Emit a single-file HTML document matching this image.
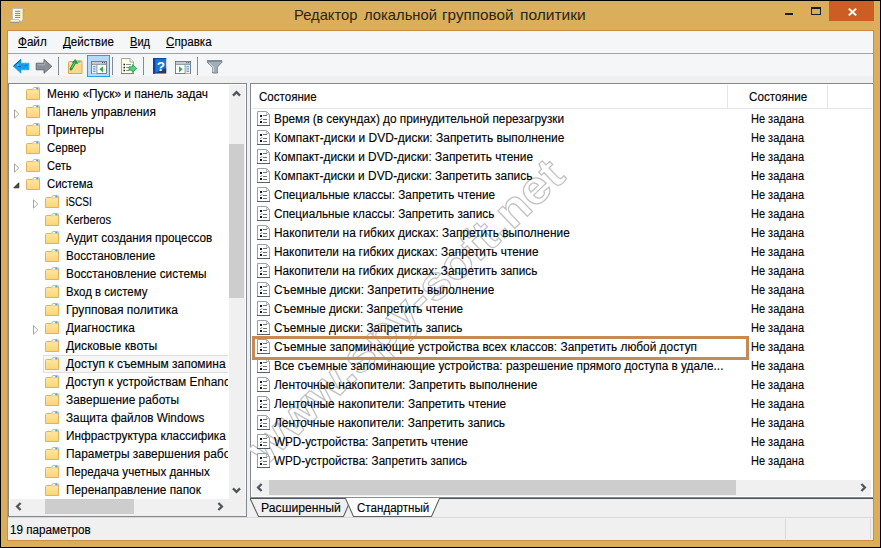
<!DOCTYPE html>
<html lang="ru"><head><meta charset="utf-8"><title>Редактор локальной групповой политики</title>
<style>
html,body{margin:0;padding:0}
body{width:881px;height:548px;position:relative;overflow:hidden;background:#DBAE5B;font-family:"Liberation Sans",sans-serif;font-size:12px;color:#000}
.abs,.fold,.t,.sel,div.b{position:absolute}
.t{white-space:nowrap;transform-origin:0 0;font-size:12px;line-height:18px;-webkit-text-stroke:0.12px #000}
.t u{text-decoration:underline;text-underline-offset:1px;text-decoration-skip-ink:none}
#frame{position:absolute;left:0;top:0;width:879px;height:546px;border:1px solid #000}
#client{position:absolute;left:7px;top:30px;width:865px;height:509px;border:1px solid #c98f48;background:#f0f0f0}
#menubar{position:absolute;left:8px;top:31px;width:865px;height:22px;background:#f5f6f7}
#tbline{position:absolute;left:8px;top:53px;width:865px;height:1px;background:#a3a3a3}
#toolbar{position:absolute;left:8px;top:54px;width:865px;height:22px;background:#f5f6f7}
#tree{position:absolute;left:8px;top:83px;width:237px;height:432px;border:1px solid #828790;background:#fff}
#treeclip{position:absolute;left:1px;top:1px;width:219px;height:414px;overflow:hidden;background:#fff}
.sel{background:#f7f7f7;border:1px solid #dedede}
#right{position:absolute;left:250px;top:83px;width:622px;height:413px;border-left:1px solid #828790;border-top:1px solid #828790;border-bottom:1px solid #858c93;background:#fff}
.sb{position:absolute;background:#f0f0f0}
.thumb{position:absolute;background:#cdcdcd}
</style></head><body>
<svg width="0" height="0" style="position:absolute"><defs>
<linearGradient id="fg" x1="0" y1="0" x2="0" y2="1"><stop offset="0" stop-color="#feeab0"/><stop offset="1" stop-color="#fad573"/></linearGradient>
<g id="folder">
<path d="M0.5 3.5 Q0.5 2.5 1.5 2.5 L6.3 2.5 L7.8 0.5 L12.5 0.5 Q13.5 0.5 13.5 1.5 L13.5 12.5 L0.5 12.5 Z" fill="url(#fg)" stroke="#e2b258" stroke-width="1"/>
<path d="M6.8 3.6 L8 2.6 L13 2.6" fill="none" stroke="#ecc67a" stroke-width="0.8"/>
<rect x="8.2" y="1" width="2.2" height="1.3" fill="#fff"/><rect x="10.3" y="1" width="2" height="1.3" fill="#3b9be8"/>
</g>
<g id="pol">
<path d="M0.5 0.5 H9.5 L12.5 3.5 V14.5 H0.5 Z" fill="#fff" stroke="#9ba1a8" stroke-width="1"/>
<path d="M9.5 0.5 V3.5 H12.5" fill="none" stroke="#b4b9bf" stroke-width="1"/>
<path d="M0 14.5 H13" stroke="#55606c" stroke-width="1"/>
<rect x="3" y="4" width="2" height="2" fill="#15151c"/><rect x="3" y="10" width="2" height="2" fill="#15151c"/>
<path d="M3 8 L3.8 8.8 L5 7.2" stroke="#6a6f76" stroke-width="0.9" fill="none"/>
<path d="M6 4.5 H10 M6 8.5 H10 M6 11.5 H10" stroke="#6b737c" stroke-width="1"/>
</g>
</defs></svg>
<div id="frame"></div>
<!-- title icon -->
<svg class="abs" style="left:9px;top:7px" width="18" height="18" viewBox="9 7 18 18">
<defs><linearGradient id="pg" x1="0" y1="0" x2="1" y2="0"><stop offset="0" stop-color="#ffffff"/><stop offset="0.55" stop-color="#fffbe0"/><stop offset="1" stop-color="#fdf2b8"/></linearGradient>
<linearGradient id="rg" x1="0" y1="0" x2="0" y2="1"><stop offset="0" stop-color="#ffffff"/><stop offset="1" stop-color="#f6d472"/></linearGradient></defs>
<path d="M13.2 8.4 L22.8 8.4 Q23.8 9.2 23.2 10.4 L23.2 18.6 Q23 20.4 21.4 21.2 L12.4 19.6 L12.4 10 Q12.4 8.6 13.2 8.4 Z" fill="url(#pg)" stroke="#aab1c0" stroke-width="0.7"/>
<path d="M23.3 9.2 V19" stroke="#8f99ad" stroke-width="0.9" stroke-dasharray="1.2 0.8"/>
<path d="M10.6 19.5 L19 19.5 Q20 21 19 22.4 L10.6 22.4 Q9.8 21 10.6 19.5 Z" fill="url(#rg)" stroke="#a9adb5" stroke-width="0.6"/>
<path d="M10.4 22.5 H19.2" stroke="#7f8794" stroke-width="0.7"/>
<path d="M15 11.3 H20.3 M15 13.4 H20.3 M15 15.4 H20.3 M15 17.4 H20.3" stroke="#6b7688" stroke-width="0.9"/>
<path d="M23.6 9.6 L25 10.8 L23.8 11.4 Z" fill="#e0883a"/>
</svg>
<!-- caption buttons -->
<div class="b" style="left:785px;top:13px;width:8px;height:2px;background:#1e1a26"></div>
<div class="b" style="left:811px;top:7px;width:8px;height:5px;border:1px solid #1e1a26;border-top-width:2px"></div>
<div class="b" style="left:829px;top:1px;width:45px;height:20px;background:#cc5e24"></div>
<svg class="abs" style="left:847.5px;top:7.5px" width="9" height="8" viewBox="0 0 9 8"><path d="M0.8 0.6 L8.2 7.4 M8.2 0.6 L0.8 7.4" stroke="#fff" stroke-width="1.9"/></svg>

<div id="client"></div>
<div id="menubar"></div><div id="tbline"></div><div id="toolbar"></div>
<!-- TOOLBAR ICONS -->
<div id="tbicons">
<svg class="abs" style="left:12px;top:58px" width="19" height="17" viewBox="12 58 19 17"><path d="M13.2 66.3 L21 59.3 L21 63.2 L28.9 63.2 L28.9 69.8 L21 69.8 L21 73.3 Z" fill="#10a1eb" stroke="#18a3ea" stroke-width="0.6" stroke-linejoin="round"/><path d="M13.6 66 L20.8 59.6" stroke="#0b3f9e" stroke-width="1"/><path d="M18 66.5 H21 M25 66.5 L27 64.5" stroke="#0b55b4" stroke-width="0.9"/><path d="M17 65 H19" stroke="#8fd8fa" stroke-width="0.9"/></svg>
<svg class="abs" style="left:35px;top:58px" width="19" height="17" viewBox="35 58 19 17"><path d="M51.8 66.3 L44 59.3 L44 63.2 L36.2 63.2 L36.2 69.8 L44 69.8 L44 73.3 Z" fill="#8b9097" stroke="#62676d" stroke-width="0.9" stroke-linejoin="round"/><path d="M37.5 64.8 H44.5 L45 62" stroke="#b5b9bd" stroke-width="0.9" fill="none"/></svg>
<div class="b" style="left:58px;top:57px;width:1px;height:18px;background:#848b94"></div>
<svg class="abs" style="left:67px;top:58px" width="17" height="17" viewBox="67 58 17 17"><path d="M68.5 62.5 Q68.5 61.5 69.5 61.5 L75.5 61.5 L76.5 60.8 L81 60.8 Q82 60.8 82 61.8 L82 73.5 L68.5 73.5 Z" fill="#fbd98a" stroke="#e0a44e" stroke-width="1"/><path d="M69 63.3 H81.5" stroke="#fdeaba" stroke-width="1"/><rect x="77.5" y="61.4" width="3" height="1.2" fill="#3f9de6"/><path d="M71 69 L74.8 62.5" fill="none" stroke="#1e9a3e" stroke-width="2.8" stroke-linecap="round"/><path d="M72.4 62.6 L75.2 59.4 L77.8 63.6 Z" fill="#1e9a3e" stroke="#1e9a3e" stroke-width="0.8" stroke-linejoin="round"/><path d="M71.6 68 L74.8 62.5" fill="none" stroke="#86e09a" stroke-width="0.8"/></svg>
<div class="b" style="left:87px;top:55px;width:21px;height:20px;border:1px solid #22a0ea;background:#b5daf7"></div>
<svg class="abs" style="left:91px;top:61px" width="16" height="13" viewBox="0 0 16 13"><rect x="0.5" y="0.5" width="15" height="12" fill="#fff" stroke="#7a8087"/><rect x="1" y="1" width="14" height="1.6" fill="#c9cdd2"/><rect x="1" y="2.6" width="14" height="1.4" fill="#9aa0a7"/><rect x="11" y="1" width="1.2" height="1.3" fill="#6b7077"/><rect x="13" y="1" width="1.2" height="1.3" fill="#6b7077"/><rect x="1" y="4" width="4.6" height="8.5" fill="#eef1f4"/><path d="M5.9 4 V12.5" stroke="#8d939a"/><path d="M2 5.8 H4.6 M2 8 H4.6 M2 10.2 H4.6" stroke="#2f8fe6" stroke-width="1.1"/><path d="M12 5.2 L12 11.4 L8.4 8.3 Z" fill="#2fae45"/></svg>
<div class="b" style="left:112px;top:57px;width:1px;height:18px;background:#848b94"></div>
<svg class="abs" style="left:120px;top:57px" width="18" height="18" viewBox="120 57 18 18"><path d="M121.5 58.5 L130 58.5 L133.5 62 L133.5 73.5 L121.5 73.5 Z" fill="#fffde6" stroke="#a5a79f"/><path d="M130 58.5 V62 H133.5" fill="#fff" stroke="#a5a79f"/><path d="M121 73.6 H134" stroke="#7d838b" stroke-width="1"/><path d="M123.5 64.5 H125 M123.5 67.5 H125 M123.5 70.5 H125" stroke="#1c1c28" stroke-width="1.3"/><path d="M126 64.5 H131 M126 67.5 H129 M126 70.5 H129" stroke="#8a8f98" stroke-width="1"/><path d="M129 66.8 L132.3 66.8 L132.3 64.6 L136.8 68.5 L132.3 72.4 L132.3 70.2 L129 70.2 Z" fill="#58d285" stroke="#1f9a46" stroke-width="0.8"/></svg>
<div class="b" style="left:143px;top:57px;width:1px;height:18px;background:#848b94"></div>
<svg class="abs" style="left:153px;top:58px" width="14" height="16" viewBox="0 0 14 16"><rect x="0" y="0" width="13.2" height="15.7" fill="#1a74d8"/><rect x="0" y="0" width="2.2" height="15.7" fill="#0c3f9c"/><rect x="2.2" y="0" width="11" height="1.2" fill="#0c47ab"/><path d="M2 15 H13.2 V10 Z" fill="#2a2c33" opacity="0.75"/><text x="7.9" y="12.8" font-family="Liberation Sans, sans-serif" font-weight="bold" font-size="13.5" fill="#fff" text-anchor="middle">?</text></svg>
<svg class="abs" style="left:175px;top:61px" width="16" height="13" viewBox="0 0 16 13"><rect x="0.5" y="0.5" width="15" height="12" fill="#fff" stroke="#7a8087"/><rect x="1" y="1" width="14" height="1.6" fill="#c9cdd2"/><rect x="1" y="2.6" width="14" height="1.4" fill="#9aa0a7"/><rect x="11" y="1" width="1.2" height="1.3" fill="#6b7077"/><rect x="13" y="1" width="1.2" height="1.3" fill="#6b7077"/><rect x="10.4" y="4" width="4.6" height="8.5" fill="#eef1f4"/><path d="M10.1 4 V12.5" stroke="#8d939a"/><path d="M11.4 5.8 H14 M11.4 8 H14 M11.4 10.2 H14" stroke="#2f8fe6" stroke-width="1.1"/><path d="M4 5.2 L4 11.4 L7.6 8.3 Z" fill="#2fae45"/></svg>
<div class="b" style="left:197px;top:57px;width:1px;height:18px;background:#848b94"></div>
<svg class="abs" style="left:206px;top:59px" width="17" height="15" viewBox="206 59 17 15"><path d="M207.3 60.6 L221.8 60.6 L221.8 62.4 L217.3 67.2 L217.3 73 L212.6 73 L212.6 67.2 L207.3 62.4 Z" fill="#a3adb7" stroke="#757d86" stroke-width="0.9"/><path d="M208 61.4 H221" stroke="#7d858d" stroke-width="1"/><path d="M209.5 63.2 L213.3 67 V72" stroke="#cfe6f7" stroke-width="1" fill="none"/></svg>
</div>

<!-- TREE -->
<div id="tree"><div id="treeclip">
</div></div>
<div id="treeitems" style="position:absolute;left:9px;top:84px;width:218.6px;height:415px;overflow:hidden">
<div style="position:absolute;left:-9px;top:-84px">
<svg class="fold" style="left:26px;top:87px" width="14" height="13" viewBox="0 0 14 13"><use href="#folder"/></svg>
<svg class="fold" style="left:26px;top:105px" width="14" height="13" viewBox="0 0 14 13"><use href="#folder"/></svg>
<svg class="abs" style="left:14px;top:108.5px" width="6" height="10" viewBox="0 0 6 10"><path d="M0.5 0.8 L4.8 5 L0.5 9.2 Z" fill="#fff" stroke="#a6a6a6" stroke-width="1"/></svg>
<svg class="fold" style="left:26px;top:123px" width="14" height="13" viewBox="0 0 14 13"><use href="#folder"/></svg>
<svg class="fold" style="left:26px;top:141px" width="14" height="13" viewBox="0 0 14 13"><use href="#folder"/></svg>
<svg class="fold" style="left:26px;top:159px" width="14" height="13" viewBox="0 0 14 13"><use href="#folder"/></svg>
<svg class="abs" style="left:14px;top:162.5px" width="6" height="10" viewBox="0 0 6 10"><path d="M0.5 0.8 L4.8 5 L0.5 9.2 Z" fill="#fff" stroke="#a6a6a6" stroke-width="1"/></svg>
<svg class="fold" style="left:26px;top:177px" width="14" height="13" viewBox="0 0 14 13"><use href="#folder"/></svg>
<svg class="abs" style="left:13px;top:182px" width="7" height="7" viewBox="0 0 7 7"><path d="M5.8 0.8 L5.8 5.8 L0.8 5.8 Z" fill="#4a4a4a" stroke="#2a2a2a" stroke-width="0.9"/></svg>
<svg class="fold" style="left:45px;top:195px" width="14" height="13" viewBox="0 0 14 13"><use href="#folder"/></svg>
<svg class="abs" style="left:33px;top:198.5px" width="6" height="10" viewBox="0 0 6 10"><path d="M0.5 0.8 L4.8 5 L0.5 9.2 Z" fill="#fff" stroke="#a6a6a6" stroke-width="1"/></svg>
<svg class="fold" style="left:45px;top:213px" width="14" height="13" viewBox="0 0 14 13"><use href="#folder"/></svg>
<svg class="fold" style="left:45px;top:231px" width="14" height="13" viewBox="0 0 14 13"><use href="#folder"/></svg>
<svg class="fold" style="left:45px;top:249px" width="14" height="13" viewBox="0 0 14 13"><use href="#folder"/></svg>
<svg class="fold" style="left:45px;top:267px" width="14" height="13" viewBox="0 0 14 13"><use href="#folder"/></svg>
<svg class="fold" style="left:45px;top:285px" width="14" height="13" viewBox="0 0 14 13"><use href="#folder"/></svg>
<svg class="fold" style="left:45px;top:303px" width="14" height="13" viewBox="0 0 14 13"><use href="#folder"/></svg>
<svg class="fold" style="left:45px;top:321px" width="14" height="13" viewBox="0 0 14 13"><use href="#folder"/></svg>
<svg class="abs" style="left:33px;top:324.5px" width="6" height="10" viewBox="0 0 6 10"><path d="M0.5 0.8 L4.8 5 L0.5 9.2 Z" fill="#fff" stroke="#a6a6a6" stroke-width="1"/></svg>
<svg class="fold" style="left:45px;top:339px" width="14" height="13" viewBox="0 0 14 13"><use href="#folder"/></svg>
<div class="sel" style="left:43px;top:355px;width:185px;height:16px"></div>
<svg class="fold" style="left:45px;top:357px" width="14" height="13" viewBox="0 0 14 13"><use href="#folder"/></svg>
<svg class="fold" style="left:45px;top:375px" width="14" height="13" viewBox="0 0 14 13"><use href="#folder"/></svg>
<svg class="fold" style="left:45px;top:393px" width="14" height="13" viewBox="0 0 14 13"><use href="#folder"/></svg>
<svg class="fold" style="left:45px;top:411px" width="14" height="13" viewBox="0 0 14 13"><use href="#folder"/></svg>
<svg class="fold" style="left:45px;top:429px" width="14" height="13" viewBox="0 0 14 13"><use href="#folder"/></svg>
<svg class="fold" style="left:45px;top:447px" width="14" height="13" viewBox="0 0 14 13"><use href="#folder"/></svg>
<svg class="fold" style="left:45px;top:465px" width="14" height="13" viewBox="0 0 14 13"><use href="#folder"/></svg>
<svg class="fold" style="left:45px;top:483px" width="14" height="13" viewBox="0 0 14 13"><use href="#folder"/></svg>
</div>
<span class="t" style="left:38.40px;top:0.84px;transform:scaleX(0.9891)">Меню «Пуск» и панель задач</span>
<span class="t" style="left:38.40px;top:18.84px;transform:scaleX(0.9878)">Панель управления</span>
<span class="t" style="left:38.40px;top:36.84px;transform:scaleX(1.0174)">Принтеры</span>
<span class="t" style="left:38.40px;top:54.84px;transform:scaleX(0.9397)">Сервер</span>
<span class="t" style="left:38.40px;top:72.84px;transform:scaleX(0.9229)">Сеть</span>
<span class="t" style="left:38.40px;top:90.84px;transform:scaleX(0.9496)">Система</span>
<span class="t" style="left:57.20px;top:108.84px;transform:scaleX(0.8405)">iSCSI</span>
<span class="t" style="left:57.20px;top:126.84px;transform:scaleX(0.9262)">Kerberos</span>
<span class="t" style="left:57.20px;top:144.84px;transform:scaleX(0.9810)">Аудит создания процессов</span>
<span class="t" style="left:57.20px;top:162.84px;transform:scaleX(0.9727)">Восстановление</span>
<span class="t" style="left:57.20px;top:180.84px;transform:scaleX(0.9851)">Восстановление системы</span>
<span class="t" style="left:57.20px;top:198.84px;transform:scaleX(0.9541)">Вход в систему</span>
<span class="t" style="left:57.20px;top:216.84px;transform:scaleX(1.0008)">Групповая политика</span>
<span class="t" style="left:57.20px;top:234.84px;transform:scaleX(0.9886)">Диагностика</span>
<span class="t" style="left:57.20px;top:252.84px;transform:scaleX(1.0146)">Дисковые квоты</span>
<span class="t" style="left:57.20px;top:270.84px;transform:scaleX(0.9983)">Доступ к съемным запомина</span>
<span class="t" style="left:57.20px;top:288.84px;transform:scaleX(0.9930)">Доступ к устройствам Enhanc</span>
<span class="t" style="left:57.20px;top:306.84px;transform:scaleX(0.9923)">Завершение работы</span>
<span class="t" style="left:57.20px;top:324.84px;transform:scaleX(0.9787)">Защита файлов Windows</span>
<span class="t" style="left:57.20px;top:342.84px;transform:scaleX(0.9827)">Инфраструктура классифика</span>
<span class="t" style="left:57.20px;top:360.84px;transform:scaleX(0.9930)">Параметры завершения рабо</span>
<span class="t" style="left:57.20px;top:378.84px;transform:scaleX(0.9702)">Передача учетных данных</span>
<span class="t" style="left:57.20px;top:396.84px;transform:scaleX(0.9880)">Перенаправление папок</span>
</div>
<!-- tree scrollbars -->
<div class="sb" style="left:229px;top:85px;width:16px;height:430px"></div>
<div class="sb" style="left:10px;top:499px;width:236px;height:17px"></div>
<div class="thumb" style="left:229px;top:144px;width:15px;height:154px"></div>
<div class="thumb" style="left:45px;top:499px;width:89px;height:15px"></div>
<svg class="abs" style="left:232px;top:90px" width="9" height="7" viewBox="0 0 9 7"><path d="M1 5.6 L4.5 2.1 L8 5.6" fill="none" stroke="#4f555b" stroke-width="2.3"/></svg>
<svg class="abs" style="left:232px;top:486.5px" width="9" height="7" viewBox="0 0 9 7"><path d="M1 1.4 L4.5 4.9 L8 1.4" fill="none" stroke="#4f555b" stroke-width="2.3"/></svg>
<svg class="abs" style="left:14.5px;top:502px" width="7" height="9" viewBox="0 0 7 9"><path d="M5.6 1 L2.1 4.5 L5.6 8" fill="none" stroke="#4f555b" stroke-width="2.3"/></svg>
<svg class="abs" style="left:216.5px;top:502px" width="7" height="9" viewBox="0 0 7 9"><path d="M1.4 1 L4.9 4.5 L1.4 8" fill="none" stroke="#4f555b" stroke-width="2.3"/></svg>

<!-- RIGHT PANEL -->
<div id="right"></div>
<div class="b" style="left:250px;top:498px;width:623px;height:1px;background:#4d545b"></div>
<div class="b" style="left:252px;top:108px;width:620px;height:1px;background:#e5e5e5"></div>
<div class="b" style="left:727px;top:85px;width:1px;height:23px;background:#e5e5e5"></div>
<div class="b" style="left:827px;top:85px;width:1px;height:23px;background:#e5e5e5"></div>
<!-- watermark -->
<svg class="abs" style="left:250px;top:84px" width="622" height="396" viewBox="250 84 622 396"><text transform="translate(265,467) rotate(-43.7)" font-family="Liberation Sans, sans-serif" font-weight="bold" font-size="46" fill="#fff" stroke="#c2c2c2" stroke-width="1.2" textLength="418" lengthAdjust="spacingAndGlyphs">www.spy-soft.net</text></svg>
<svg class="abs" style="left:257px;top:111px" width="13" height="15" viewBox="0 0 13 15"><use href="#pol"/></svg>
<svg class="abs" style="left:257px;top:130px" width="13" height="15" viewBox="0 0 13 15"><use href="#pol"/></svg>
<svg class="abs" style="left:257px;top:149px" width="13" height="15" viewBox="0 0 13 15"><use href="#pol"/></svg>
<svg class="abs" style="left:257px;top:168px" width="13" height="15" viewBox="0 0 13 15"><use href="#pol"/></svg>
<svg class="abs" style="left:257px;top:187px" width="13" height="15" viewBox="0 0 13 15"><use href="#pol"/></svg>
<svg class="abs" style="left:257px;top:206px" width="13" height="15" viewBox="0 0 13 15"><use href="#pol"/></svg>
<svg class="abs" style="left:257px;top:225px" width="13" height="15" viewBox="0 0 13 15"><use href="#pol"/></svg>
<svg class="abs" style="left:257px;top:244px" width="13" height="15" viewBox="0 0 13 15"><use href="#pol"/></svg>
<svg class="abs" style="left:257px;top:263px" width="13" height="15" viewBox="0 0 13 15"><use href="#pol"/></svg>
<svg class="abs" style="left:257px;top:282px" width="13" height="15" viewBox="0 0 13 15"><use href="#pol"/></svg>
<svg class="abs" style="left:257px;top:301px" width="13" height="15" viewBox="0 0 13 15"><use href="#pol"/></svg>
<svg class="abs" style="left:257px;top:320px" width="13" height="15" viewBox="0 0 13 15"><use href="#pol"/></svg>
<svg class="abs" style="left:257px;top:339px" width="13" height="15" viewBox="0 0 13 15"><use href="#pol"/></svg>
<svg class="abs" style="left:257px;top:358px" width="13" height="15" viewBox="0 0 13 15"><use href="#pol"/></svg>
<svg class="abs" style="left:257px;top:377px" width="13" height="15" viewBox="0 0 13 15"><use href="#pol"/></svg>
<svg class="abs" style="left:257px;top:396px" width="13" height="15" viewBox="0 0 13 15"><use href="#pol"/></svg>
<svg class="abs" style="left:257px;top:415px" width="13" height="15" viewBox="0 0 13 15"><use href="#pol"/></svg>
<svg class="abs" style="left:257px;top:434px" width="13" height="15" viewBox="0 0 13 15"><use href="#pol"/></svg>
<svg class="abs" style="left:257px;top:453px" width="13" height="15" viewBox="0 0 13 15"><use href="#pol"/></svg>
<div class="b" style="left:252px;top:336px;width:491px;height:17.5px;border:3px solid #c68a52"></div>
<!-- right h scrollbar -->
<div class="sb" style="left:252px;top:480px;width:619px;height:16px"></div>
<div class="thumb" style="left:269px;top:480px;width:467px;height:15px"></div>
<svg class="abs" style="left:256px;top:483px" width="7" height="9" viewBox="0 0 7 9"><path d="M5.6 1 L2.1 4.5 L5.6 8" fill="none" stroke="#4f555b" stroke-width="2.3"/></svg>
<svg class="abs" style="left:859.5px;top:483px" width="7" height="9" viewBox="0 0 7 9"><path d="M1.4 1 L4.9 4.5 L1.4 8" fill="none" stroke="#4f555b" stroke-width="2.3"/></svg>
<!-- tabs -->
<svg class="abs" style="left:246px;top:496px" width="627" height="23" viewBox="246 496 627 23">
<path d="M250.3 499 L258.5 516.5 L343.5 516.5 L351 499" fill="#f0f0f0" stroke="#5f6366" stroke-width="1.1"/>
<path d="M345 498 L353.5 516.5 L431.5 516.5 L440 498 Z" fill="#fff" stroke="none"/>
<path d="M345.3 498 L353.5 516.5 L431.5 516.5 L439.7 498" fill="none" stroke="#5f6366" stroke-width="1.1"/>
</svg>
<!-- status bar -->
<div class="b" style="left:8px;top:517px;width:865px;height:1px;background:#d9d9d9"></div>
<div class="b" style="left:785px;top:519px;width:1px;height:20px;background:#d9d9d9"></div>
<div class="b" style="left:870px;top:519px;width:1px;height:20px;background:#d9d9d9"></div>
<span class="t" style="left:294.12px;top:4.30px;font-size:15px;line-height:22px;transform:scaleX(0.9822);color:#2a2418;-webkit-text-stroke:0">Редактор</span>
<span class="t" style="left:364.10px;top:4.30px;font-size:15px;line-height:22px;transform:scaleX(0.9852);color:#2a2418;-webkit-text-stroke:0">локальной</span>
<span class="t" style="left:442.28px;top:4.30px;font-size:15px;line-height:22px;transform:scaleX(1.0178);color:#2a2418;-webkit-text-stroke:0">групповой</span>
<span class="t" style="left:519.56px;top:4.30px;font-size:15px;line-height:22px;transform:scaleX(1.0358);color:#2a2418;-webkit-text-stroke:0">политики</span>
<span class="t" style="left:17.80px;top:32.84px;font-size:12px;line-height:18px;transform:scaleX(0.9729);"><u>Ф</u>айл</span>
<span class="t" style="left:62.70px;top:32.84px;font-size:12px;line-height:18px;transform:scaleX(0.9646);"><u>Д</u>ействие</span>
<span class="t" style="left:130.10px;top:32.84px;font-size:12px;line-height:18px;transform:scaleX(0.9214);"><u>В</u>ид</span>
<span class="t" style="left:165.80px;top:32.84px;font-size:12px;line-height:18px;transform:scaleX(0.9705);"><u>С</u>правка</span>
<span class="t" style="left:274.40px;top:109.84px;font-size:12px;line-height:18px;transform:scaleX(0.9844);">Время (в секундах) до принудительной перезагрузки</span>
<span class="t" style="left:751.40px;top:109.84px;font-size:12px;line-height:18px;transform:scaleX(0.9166);">Не задана</span>
<span class="t" style="left:274.40px;top:128.84px;font-size:12px;line-height:18px;transform:scaleX(0.9961);">Компакт-диски и DVD-диски: Запретить выполнение</span>
<span class="t" style="left:751.40px;top:128.84px;font-size:12px;line-height:18px;transform:scaleX(0.9166);">Не задана</span>
<span class="t" style="left:274.40px;top:147.84px;font-size:12px;line-height:18px;transform:scaleX(0.9904);">Компакт-диски и DVD-диски: Запретить чтение</span>
<span class="t" style="left:751.40px;top:147.84px;font-size:12px;line-height:18px;transform:scaleX(0.9166);">Не задана</span>
<span class="t" style="left:274.40px;top:166.84px;font-size:12px;line-height:18px;transform:scaleX(0.9901);">Компакт-диски и DVD-диски: Запретить запись</span>
<span class="t" style="left:751.40px;top:166.84px;font-size:12px;line-height:18px;transform:scaleX(0.9166);">Не задана</span>
<span class="t" style="left:274.40px;top:185.84px;font-size:12px;line-height:18px;transform:scaleX(0.9787);">Специальные классы: Запретить чтение</span>
<span class="t" style="left:751.40px;top:185.84px;font-size:12px;line-height:18px;transform:scaleX(0.9166);">Не задана</span>
<span class="t" style="left:274.40px;top:204.84px;font-size:12px;line-height:18px;transform:scaleX(0.9779);">Специальные классы: Запретить запись</span>
<span class="t" style="left:751.40px;top:204.84px;font-size:12px;line-height:18px;transform:scaleX(0.9166);">Не задана</span>
<span class="t" style="left:274.40px;top:223.84px;font-size:12px;line-height:18px;transform:scaleX(0.9906);">Накопители на гибких дисках: Запретить выполнение</span>
<span class="t" style="left:751.40px;top:223.84px;font-size:12px;line-height:18px;transform:scaleX(0.9166);">Не задана</span>
<span class="t" style="left:274.40px;top:242.84px;font-size:12px;line-height:18px;transform:scaleX(0.9845);">Накопители на гибких дисках: Запретить чтение</span>
<span class="t" style="left:751.40px;top:242.84px;font-size:12px;line-height:18px;transform:scaleX(0.9166);">Не задана</span>
<span class="t" style="left:274.40px;top:261.84px;font-size:12px;line-height:18px;transform:scaleX(0.9827);">Накопители на гибких дисках: Запретить запись</span>
<span class="t" style="left:751.40px;top:261.84px;font-size:12px;line-height:18px;transform:scaleX(0.9166);">Не задана</span>
<span class="t" style="left:274.40px;top:280.84px;font-size:12px;line-height:18px;transform:scaleX(0.9854);">Съемные диски: Запретить выполнение</span>
<span class="t" style="left:751.40px;top:280.84px;font-size:12px;line-height:18px;transform:scaleX(0.9166);">Не задана</span>
<span class="t" style="left:274.40px;top:299.84px;font-size:12px;line-height:18px;transform:scaleX(0.9766);">Съемные диски: Запретить чтение</span>
<span class="t" style="left:751.40px;top:299.84px;font-size:12px;line-height:18px;transform:scaleX(0.9166);">Не задана</span>
<span class="t" style="left:274.40px;top:318.84px;font-size:12px;line-height:18px;transform:scaleX(0.9766);">Съемные диски: Запретить запись</span>
<span class="t" style="left:751.40px;top:318.84px;font-size:12px;line-height:18px;transform:scaleX(0.9166);">Не задана</span>
<span class="t" style="left:274.40px;top:337.84px;font-size:12px;line-height:18px;transform:scaleX(0.9892);">Съемные запоминающие устройства всех классов: Запретить любой доступ</span>
<span class="t" style="left:751.40px;top:337.84px;font-size:12px;line-height:18px;transform:scaleX(0.9166);">Не задана</span>
<span class="t" style="left:274.40px;top:356.84px;font-size:12px;line-height:18px;transform:scaleX(0.9853);">Все съемные запоминающие устройства: разрешение прямого доступа в удале...</span>
<span class="t" style="left:751.40px;top:356.84px;font-size:12px;line-height:18px;transform:scaleX(0.9166);">Не задана</span>
<span class="t" style="left:274.40px;top:375.84px;font-size:12px;line-height:18px;transform:scaleX(0.9980);">Ленточные накопители: Запретить выполнение</span>
<span class="t" style="left:751.40px;top:375.84px;font-size:12px;line-height:18px;transform:scaleX(0.9166);">Не задана</span>
<span class="t" style="left:274.40px;top:394.84px;font-size:12px;line-height:18px;transform:scaleX(0.9923);">Ленточные накопители: Запретить чтение</span>
<span class="t" style="left:751.40px;top:394.84px;font-size:12px;line-height:18px;transform:scaleX(0.9166);">Не задана</span>
<span class="t" style="left:274.40px;top:413.84px;font-size:12px;line-height:18px;transform:scaleX(0.9903);">Ленточные накопители: Запретить запись</span>
<span class="t" style="left:751.40px;top:413.84px;font-size:12px;line-height:18px;transform:scaleX(0.9166);">Не задана</span>
<span class="t" style="left:274.40px;top:432.84px;font-size:12px;line-height:18px;transform:scaleX(0.9732);">WPD-устройства: Запретить чтение</span>
<span class="t" style="left:751.40px;top:432.84px;font-size:12px;line-height:18px;transform:scaleX(0.9166);">Не задана</span>
<span class="t" style="left:274.40px;top:451.84px;font-size:12px;line-height:18px;transform:scaleX(0.9712);">WPD-устройства: Запретить запись</span>
<span class="t" style="left:751.40px;top:451.84px;font-size:12px;line-height:18px;transform:scaleX(0.9166);">Не задана</span>
<span class="t" style="left:258.50px;top:87.84px;font-size:12px;line-height:18px;transform:scaleX(0.9634);">Состояние</span>
<span class="t" style="left:748.50px;top:87.84px;font-size:12px;line-height:18px;transform:scaleX(0.9717);">Состояние</span>
<span class="t" style="left:261.20px;top:498.84px;font-size:12px;line-height:18px;transform:scaleX(1.0175);">Расширенный</span>
<span class="t" style="left:356.60px;top:498.84px;font-size:12px;line-height:18px;transform:scaleX(0.9655);">Стандартный</span>
<span class="t" style="left:10.30px;top:520.84px;font-size:12px;line-height:18px;transform:scaleX(0.9737);">19 параметров</span>
</body></html>
